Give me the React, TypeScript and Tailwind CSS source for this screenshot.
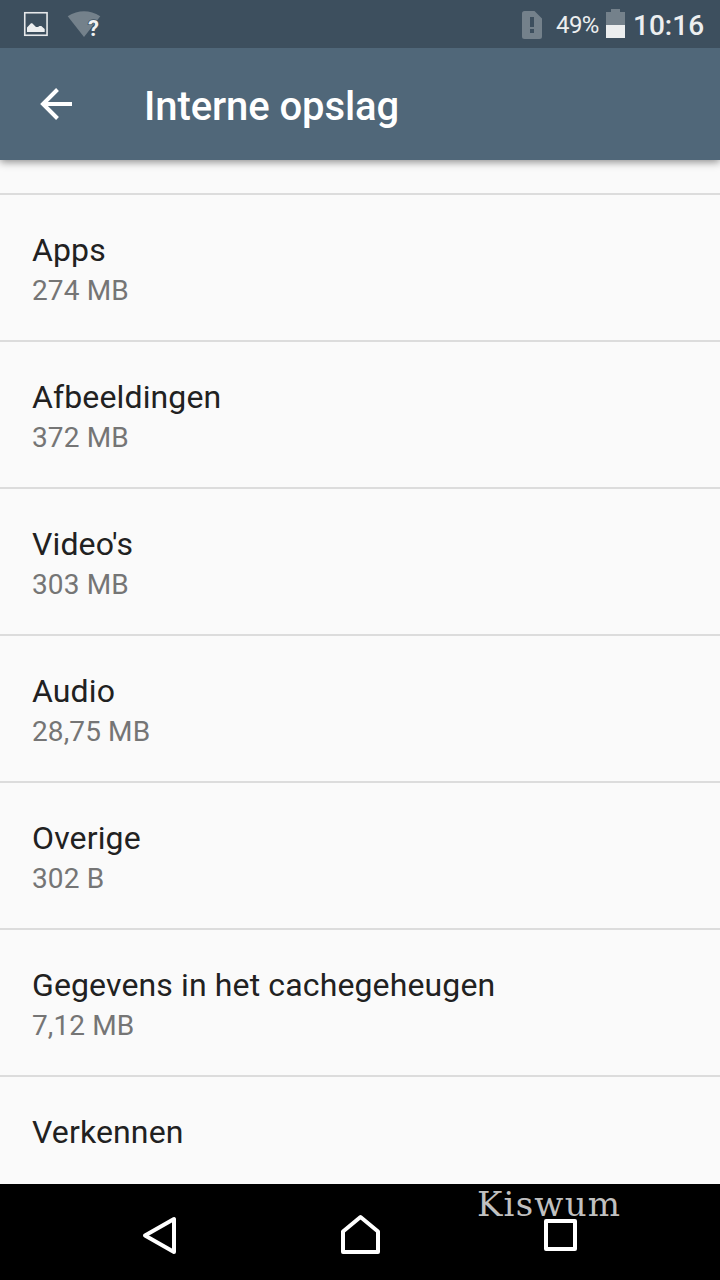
import { useState } from 'react';

interface StorageItem {
  id: string;
  title: string;
  size?: string;
}

const storageItems: StorageItem[] = [
  { id: 'apps', title: 'Apps', size: '274 MB' },
  { id: 'images', title: 'Afbeeldingen', size: '372 MB' },
  { id: 'videos', title: "Video's", size: '303 MB' },
  { id: 'audio', title: 'Audio', size: '28,75 MB' },
  { id: 'other', title: 'Overige', size: '302 B' },
  { id: 'cache', title: 'Gegevens in het cachegeheugen', size: '7,12 MB' },
  { id: 'explore', title: 'Verkennen' },
];

function StatusBar() {
  return (
    <div className="relative z-20 flex h-12 shrink-0 items-center justify-between bg-[#3d4f5e] text-[#eceeef]">
      {/* Notifications */}
      <div className="flex h-12">
        <svg width="110" height="48" viewBox="0 0 110 48">
          <rect x="24.75" y="12.75" width="22.3" height="22.5" fill="none" stroke="#e6e8ea" strokeWidth="1.6" />
          <path d="M27 32V27.5L31 23.2H32.2L36 27H38L39.5 26H41.3L44.7 29V32Z" fill="#eceeef" />
          <path d="M67.7 16.2Q84 6.2 100.3 16.2L84 37Z" fill="#74818b" />
          <text
            x="88"
            y="36"
            fontSize="22"
            fontWeight="700"
            fill="#f1f2f3"
            stroke="#3d4f5e"
            strokeWidth="1.5"
            paintOrder="stroke"
            fontFamily="Roboto, sans-serif"
          >
            ?
          </text>
        </svg>
      </div>

      {/* Sim, battery and clock */}
      <div className="flex h-12 items-center pr-4">
        <svg width="20" height="48" viewBox="0 0 20 48">
          <path
            fillRule="evenodd"
            d="M2.5 11H12.5L20 18.5V36.5Q20 39 17.5 39H2.5Q0 39 0 36.5V13.5Q0 11 2.5 11ZM8 17V27H12V17ZM8 29V33H12V29Z"
            fill="#74818b"
          />
        </svg>
        <span className="ml-3.5 w-[44px] pt-0.5 text-2xl leading-7 tracking-[-0.6px]">49%</span>
        <svg className="ml-1.5" width="19" height="48" viewBox="0 0 19 48">
          <path d="M5 9H14V12H19V25H0V12H5Z" fill="#74818b" />
          <rect y="25" width="19" height="13" fill="#eceeef" />
        </svg>
        <span className="ml-2 w-[71px] pt-1 text-[28px] leading-8 font-medium">10:16</span>
      </div>
    </div>
  );
}

function AppBar() {
  return (
    <header className="relative z-10 flex h-28 shrink-0 items-center bg-[#506779] text-white shadow-[0_2px_8px_rgba(0,0,0,0.45)]">
      <button className="ml-8 flex h-12 w-12" aria-label="Terug">
        <svg width="48" height="48" viewBox="0 0 48 48" fill="none" stroke="#fff" strokeWidth="4">
          <path d="M40 24H11M25.5 9.5L11 24L25.5 38.5" />
        </svg>
      </button>
      <h1 className="ml-16 pt-1.5 text-[40px] leading-[48px] font-medium tracking-[-0.08px]">Interne opslag</h1>
    </header>
  );
}

function NavBar() {
  return (
    <nav className="relative flex h-24 shrink-0 items-center justify-center bg-black">
      <div className="flex w-[200px] justify-center">
        <svg width="48" height="48" viewBox="0 0 48 48" fill="none" stroke="#fff" strokeWidth="4" strokeLinejoin="round">
          <path d="M9 27.5L38 11V44Z" />
        </svg>
      </div>
      <div className="flex w-[200px] justify-center">
        <svg width="48" height="48" viewBox="0 0 48 48" fill="none" stroke="#fff" strokeWidth="4" strokeLinejoin="round">
          <path d="M7 44V23.5L24.5 9L42 23.5V44Z" />
        </svg>
      </div>
      <div className="flex w-[200px] justify-center">
        <svg width="48" height="48" viewBox="0 0 48 48" fill="none" stroke="#fff" strokeWidth="4" strokeLinejoin="round">
          <rect x="10" y="13" width="29" height="28" />
        </svg>
      </div>
      <span className="absolute top-0 left-[477px] font-['DejaVu_Serif',serif] text-[34px] leading-[40px] tracking-[1.2px] text-[#c0c0c0]">
        Kiswum
      </span>
    </nav>
  );
}

export default function App() {
  const [items] = useState<StorageItem[]>(storageItems);

  return (
    <div className="flex h-[1280px] w-[720px] flex-col overflow-hidden bg-[#fafafa] font-[Roboto,sans-serif]">
      <StatusBar />
      <AppBar />

      {/* Storage categories */}
      <main className="min-h-0 flex-1 overflow-hidden pt-[33px]">
        {items.map((item) => (
          <div key={item.id} className="h-[147px] border-t-2 border-[#dcdcdc] px-8 pt-[35px]">
            <div className="text-[32px] leading-10 tracking-[0.13px] text-[#212121]">{item.title}</div>
            {item.size && <div className="pt-px text-[28px] leading-10 tracking-[0.12px] text-[#757575]">{item.size}</div>}
          </div>
        ))}
      </main>

      <NavBar />
    </div>
  );
}
